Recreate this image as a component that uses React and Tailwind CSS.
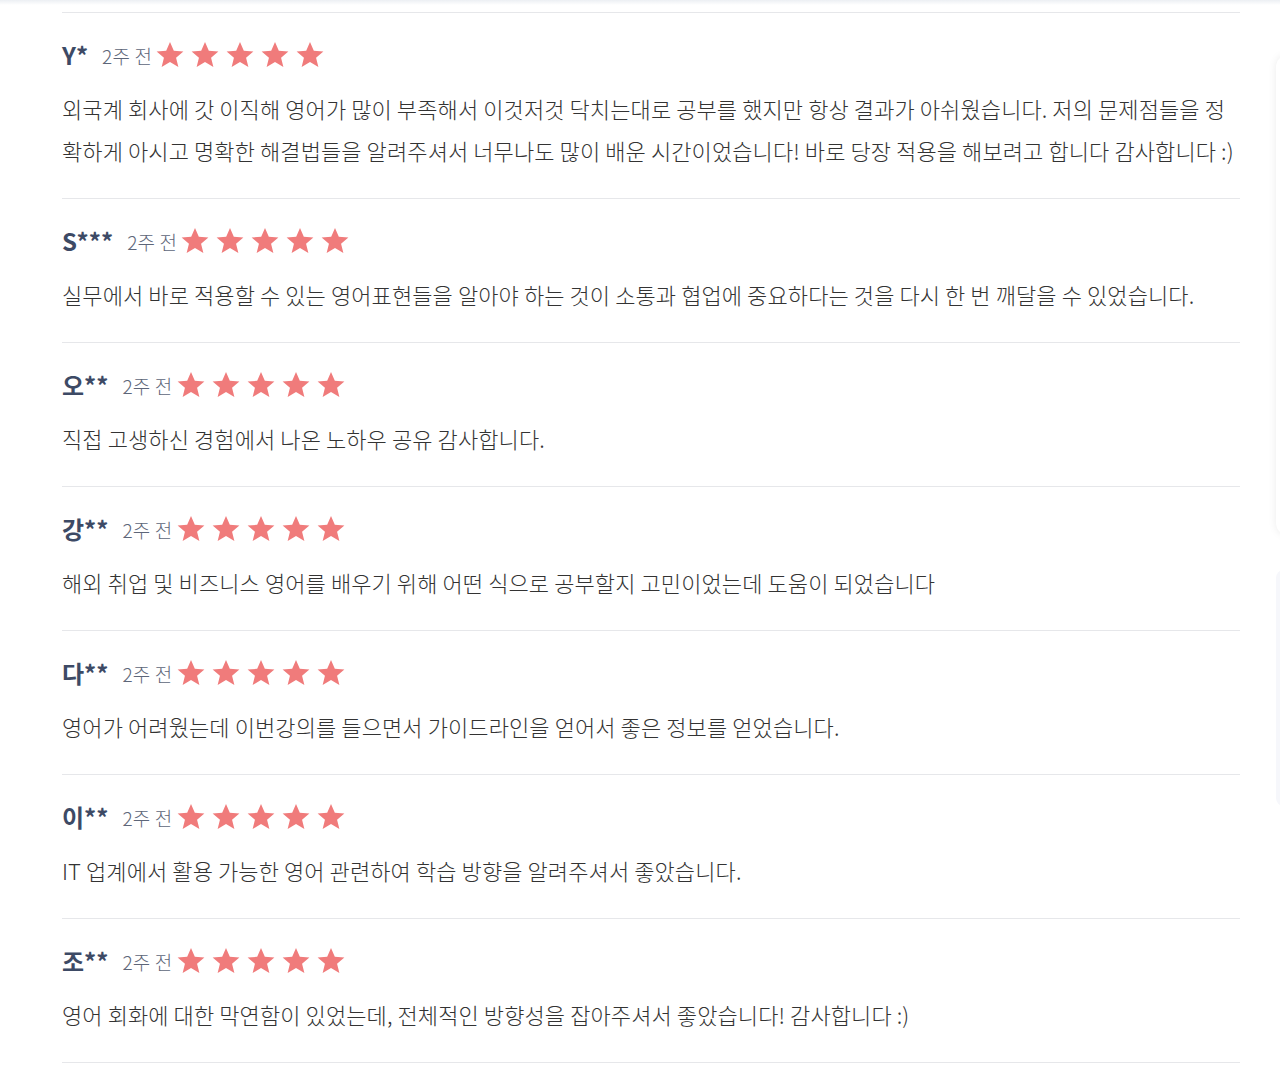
const reviews = [
  {
    name: 'Y*',
    body: '외국계 회사에 갓 이직해 영어가 많이 부족해서 이것저것 닥치는대로 공부를 했지만 항상 결과가 아쉬웠습니다. 저의 문제점들을 정확하게 아시고 명확한 해결법들을 알려주셔서 너무나도 많이 배운 시간이었습니다! 바로 당장 적용을 해보려고 합니다 감사합니다 :)',
  },
  {
    name: 'S***',
    body: '실무에서 바로 적용할 수 있는 영어표현들을 알아야 하는 것이 소통과 협업에 중요하다는 것을 다시 한 번 깨달을 수 있었습니다.',
  },
  { name: '오**', body: '직접 고생하신 경험에서 나온 노하우 공유 감사합니다.' },
  {
    name: '강**',
    body: '해외 취업 및 비즈니스 영어를 배우기 위해 어떤 식으로 공부할지 고민이었는데 도움이 되었습니다',
  },
  {
    name: '다**',
    body: '영어가 어려웠는데 이번강의를 들으면서 가이드라인을 얻어서 좋은 정보를 얻었습니다.',
  },
  { name: '이**', body: 'IT 업계에서 활용 가능한 영어 관련하여 학습 방향을 알려주셔서 좋았습니다.' },
  {
    name: '조**',
    body: '영어 회화에 대한 막연함이 있었는데, 전체적인 방향성을 잡아주셔서 좋았습니다! 감사합니다 :)',
  },
];

const Star = () => (
  <svg width="30" height="30" viewBox="0 0 24 24" className="-mx-[1px]">
    <path
      d="M12 1.6l3.05 7.05 7.65.55-5.85 4.95 1.85 7.45L12 17.55 5.3 21.6l1.85-7.45L1.3 9.2l7.65-.55z"
      fill="#f07b7b"
    />
  </svg>
);

const ReviewItem = ({ name, body }) => (
  <div className="border-b border-[#e6e7ea] pt-[26px] pb-[27px]">
    <div className="flex items-center h-[32px]">
      <span className="text-[24px] font-bold text-[#3d4a65] leading-none">{name}</span>
      <span className="ml-[14px] text-[19px] font-light tracking-[0.2px] text-[#5d6679] leading-none">2주 전</span>
      <div className="flex ml-[4px] gap-[7px]">
        {[0, 1, 2, 3, 4].map((i) => (
          <Star key={i} />
        ))}
      </div>
    </div>
    <p className="mt-[16px] text-[22px] font-light tracking-[0.1px] leading-[42px] text-[#333333]">{body}</p>
  </div>
);

export default function App() {
  return (
    <div
      className="relative w-[1280px] h-[1068px] bg-white overflow-hidden"
      style={{ fontFamily: '"Noto Sans CJK KR", "Noto Sans", sans-serif' }}
    >
      <div className="absolute top-0 left-0 right-0 h-[5px] bg-gradient-to-b from-[#eceff3] to-white" />
      <div className="absolute left-[1276px] top-[55px] w-[20px] h-[480px] rounded-tl-[12px] rounded-bl-[12px] bg-white shadow-[0_0_8px_rgba(0,0,0,0.08)]" />
      <div className="absolute left-[1276px] top-[570px] w-[20px] h-[236px] rounded-tl-[8px] rounded-bl-[8px] bg-[#f6f7fb]" />
      <div className="ml-[62px] w-[1178px] pt-[12px]">
        <div className="border-t border-[#e6e7ea]" />
        {reviews.map((r, i) => (
          <ReviewItem key={i} {...r} />
        ))}
      </div>
    </div>
  );
}
